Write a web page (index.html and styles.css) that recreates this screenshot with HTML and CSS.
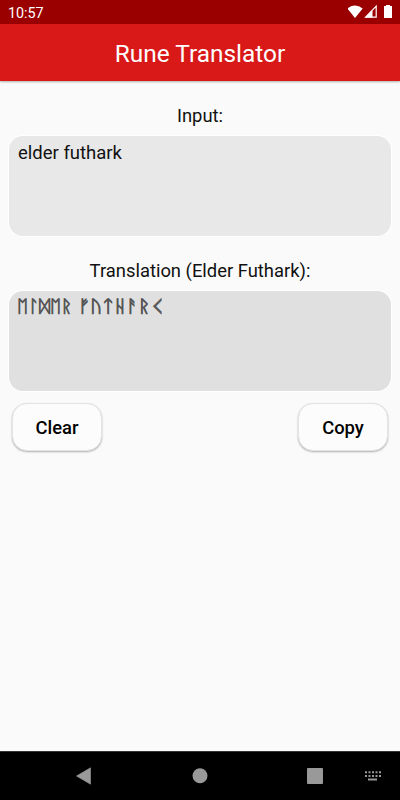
FILE: index.html
```html
<!DOCTYPE html>
<html lang="en">
<head>
    <meta charset="UTF-8">
    <meta name="viewport" content="width=device-width, initial-scale=1.0">
    <title>Rune Translator</title>
    <link rel="stylesheet" href="styles.css">
</head>
<body>

    <div class="status-bar">
        <span class="time">10:57</span>
        <svg class="status-icons" width="48" height="14" viewBox="0 0 48 14">
            <path d="M-0.7 3.5 Q7 -2.3 14.7 3.5 L7 13 Z" fill="#fff"/>
            <path d="M28.2 1.2 V12.2 H17.6 Z" fill="none" stroke="#fff" stroke-width="1.2"/>
            <path d="M24.5 5 V12.4 H17.2 Z" fill="#fff"/>
            <path d="M38 1 V0 H42 V1 H44 V13 H36 V1 Z" fill="#fff"/>
        </svg>
    </div>

    <div class="header">
        <h1>Rune Translator</h1>
    </div>

    <div class="content">
        <label class="label" for="input">Input:</label>
        <textarea id="input" class="box" spellcheck="false">elder futhark</textarea>

        <div class="label">Translation (Elder Futhark):</div>
        <div class="box output"><span class="runes">ᛖᛚᛞᛖᚱ</span> <span class="runes wide">ᚠᚢᛏᚺᚨᚱ<span class="kaunan">ᚲ</span></span></div>

        <div class="buttons">
            <button>Clear</button>
            <button>Copy</button>
        </div>
    </div>

    <div class="nav-bar">
        <svg width="400" height="48" viewBox="0 0 400 48">
            <path d="M76.5 24 L90.5 15.8 V32.2 Z" fill="#999" stroke="#999" stroke-width="0.6" stroke-linejoin="round"/>
            <circle cx="200" cy="23.7" r="7.5" fill="#999"/>
            <rect x="307" y="16" width="16" height="16" rx="1" fill="#999"/>
            <path d="M365 20.2 H381 M365 24 H381" stroke="#999" stroke-width="2" stroke-dasharray="2 1.5"/>
            <path d="M368 27.5 H377" stroke="#999" stroke-width="2"/>
        </svg>
    </div>

</body>
</html>
```
FILE: styles.css
```css
* {
    box-sizing: border-box;
}
body {
    font-family: Roboto, "Noto Sans", sans-serif;
    margin: 0;
    height: 100vh;
    display: flex;
    flex-direction: column;
    background: #fafafa;
    color: #111;
}
.status-bar {
    height: 24px;
    padding: 0 4px 0 8px;
    display: flex;
    justify-content: space-between;
    align-items: center;
    background: #9b0000;
    color: #fff;
}
.time {
    font-size: 14.3px;
    line-height: 24px;
    padding-top: 2px;
}
.header {
    height: 57px;
    background: #d91818;
    color: #fff;
    text-align: center;
    box-shadow: 0 1px 2px rgba(0, 0, 0, 0.3);
}
.header h1 {
    font-size: 24.4px;
    font-weight: 400;
    line-height: 60px;
    margin: 0;
}
.content {
    flex: 1;
    padding: 20px 9px 0;
}
.label {
    display: block;
    height: 35px;
    font-size: 18.4px;
    line-height: 30px;
    text-align: center;
}
.box {
    display: block;
    width: 100%;
    height: 100px;
    margin: 0 0 20px;
    padding: 5px 9px;
    border: none;
    border-radius: 14px;
    outline: none;
    resize: none;
    background: #e8e8e8;
    color: #111;
    font-family: inherit;
    font-size: 18.5px;
    line-height: 24px;
    box-shadow: 0 0 0 1px #fff;
}
.output {
    margin-bottom: 12px;
    padding: 3px 8px;
    background: #e0e0e0;
    color: #555;
    font-size: 17px;
    white-space: nowrap;
}
.runes {
    display: inline-block;
    -webkit-text-stroke: 0.8px #555;
    transform: scaleX(1.09);
    transform-origin: left;
}
.runes.wide {
    margin-left: 7px;
    transform: scaleX(1.2);
}
/* the kaunan glyph is only half as tall as the other runes */
.kaunan {
    margin-left: -4px;
    font-size: 34px;
    line-height: 0;
    vertical-align: -6px;
    -webkit-text-stroke-width: 0.5px;
}
.buttons {
    display: flex;
    justify-content: space-between;
    padding: 0 3px;
}
.buttons button {
    width: 90px;
    height: 48px;
    padding: 0;
    border: 1px solid #e3e3e3;
    border-radius: 15px;
    background: #fcfcfc;
    box-shadow: 0 1px 2px rgba(0, 0, 0, 0.3);
    color: #000;
    font-family: inherit;
    font-size: 18.4px;
    font-weight: 500;
}
.nav-bar {
    height: 49px;
    border-top: 1px solid #333;
    background: #000;
}
.nav-bar svg {
    display: block;
}
```
